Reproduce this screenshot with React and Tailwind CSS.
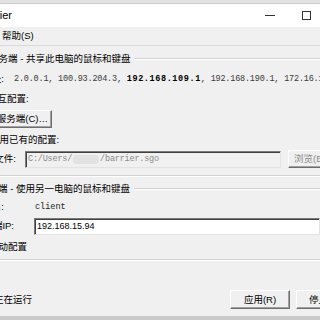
import React from "react";

const cjk = "font-['Liberation_Sans','Noto_Sans_CJK_SC',sans-serif]";
const mono = "font-['Liberation_Mono','Noto_Sans_CJK_SC',monospace]";

// raised classic button edges
const raised =
  "border border-t-[#ffffff] border-l-[#ffffff] border-b-[#6e6e6e] border-r-[#6e6e6e] bg-[#f0f0f0] shadow-[inset_-1px_-1px_0_#a0a0a0]";
const sunken =
  "border border-t-[#7a7a7a] border-l-[#7a7a7a] border-b-[#e3e3e3] border-r-[#e3e3e3] shadow-[inset_1px_1px_0_#404040]";

const GroupTitle = ({ text, shift }) => (
  <div className="flex items-center h-[12px] whitespace-nowrap">
    <span className={`text-[9.5px] leading-none text-black ${shift}`}>{text}</span>
    <div className="flex-1 ml-[4px] h-[2px] border-t border-[#d2d2d2] border-b-white border-b" />
  </div>
);

const ClipLabel = ({ w, text, extra = "" }) => (
  <div className={`flex justify-end shrink-0 whitespace-nowrap ${w}`}>
    <span className={`text-[9.5px] leading-none text-black ${extra}`}>{text}</span>
  </div>
);

export default function App() {
  return (
    <div className={`w-[320px] h-[320px] overflow-hidden bg-[#f0f0f0] flex flex-col ${cjk}`}>
      {/* window top edge */}
      <div className="h-[4px] bg-[#e3e3e3] border-b border-[#cdcdcd] shrink-0" />

      {/* title bar */}
      <div className="h-[23px] bg-white flex items-center shrink-0">
        <span className="text-[11px] text-black ml-[-21px] whitespace-nowrap">Barrier</span>
        <div className="flex-1" />
        <div className="w-[10px] h-px bg-[#333] mr-[27px]" />
        <div className="w-[9px] h-[9px] border border-[#333] mr-[9px]" />
      </div>

      {/* menu bar */}
      <div className="h-[19px] flex items-center border-b border-[#dadada] shrink-0">
        <span className="text-[9.5px] leading-none text-black ml-[2px]">帮助(S)</span>
      </div>

      <div className="flex flex-col mt-[7px]">
        <GroupTitle text="服务端 - 共享此电脑的鼠标和键盘" shift="ml-[-11px]" />

        {/* IP addresses */}
        <div className="flex items-center h-[12px] mt-[8px] whitespace-nowrap">
          <ClipLabel w="w-[4px]" text="IP地址:" />
          <span className={`${mono} text-[8.5px] leading-none text-[#3a3a3a] ml-[10px] tracking-[-0.2px]`}>
            2.0.0.1, 100.93.204.3,{" "}
            <b className="text-black tracking-[0.6px]">192.168.109.1</b>, 192.168.190.1, 172.16.1.1
          </span>
        </div>

        <div className="flex items-center h-[12px] mt-[8px] whitespace-nowrap">
          <span className="text-[9.5px] leading-none text-black ml-[-12px]">交互配置:</span>
        </div>

        <div className="flex mt-[5px] h-[18px]">
          <div className="w-[52px] flex justify-end whitespace-nowrap">
            <button className={`h-[18px] px-[3px] text-[9.5px] leading-none text-black ${raised}`}>
              配置服务端(C)…
            </button>
          </div>
        </div>

        <div className="flex items-center h-[12px] mt-[6px] whitespace-nowrap">
          <span className="text-[9.5px] leading-none text-black ml-[-10px]">使用已有的配置:</span>
        </div>

        <div className="flex items-center h-[18px] mt-[4px]">
          <ClipLabel w="w-[16px]" text="配置文件:" />
          <div className={`ml-[9px] w-[256px] shrink-0 h-[17px] bg-[#f0f0f0] flex items-center ${sunken}`}>
            <span className={`${mono} text-[8.5px] leading-none text-[#8a8a8a] ml-[2px] whitespace-nowrap flex items-center tracking-[-0.2px]`}>
              C:/Users/
              <span className="inline-block w-[26px] h-[9px] rounded-[4px] bg-[#e2e2e2] mx-[1px]" />
              /barrier.sgo
            </span>
          </div>
          <button className={`ml-[7px] h-[18px] w-[50px] shrink-0 text-left pl-[5px] text-[9.5px] leading-none text-[#8a8a8a] whitespace-nowrap ${raised}`}>
            浏览(B)…
          </button>
        </div>

        <div className="mt-[7px] h-[2px] border-t border-[#d2d2d2] border-b border-b-white" />

        <div className="mt-[6px]">
          <GroupTitle text="客户端 - 使用另一电脑的鼠标和键盘" shift="ml-[-21px]" />
        </div>

        <div className="flex items-center h-[12px] mt-[6px] whitespace-nowrap">
          <ClipLabel w="w-[4px]" text="屏幕名:" />
          <span className={`${mono} text-[8.5px] leading-none text-[#222] ml-[31px]`}>client</span>
        </div>

        <div className="flex items-center h-[18px] mt-[4px]">
          <ClipLabel w="w-[14px]" text="服务端IP:" />
          <div className={`ml-[20px] flex-1 h-[17px] bg-white flex items-center ${sunken}`}>
            <span className="text-[9px] leading-none text-black ml-[2px] font-['Liberation_Sans',sans-serif]">
              192.168.15.94
            </span>
          </div>
        </div>

        <div className="flex items-center h-[12px] mt-[6px] whitespace-nowrap">
          <span className="text-[9.5px] leading-none text-black ml-[-11px]">自动配置</span>
        </div>

        <div className="mt-[6px] h-[2px] border-t border-[#d2d2d2] border-b border-b-white" />

        {/* status + buttons */}
        <div className="flex items-center h-[19px] mt-[29px]">
          <span className="text-[9.5px] leading-none text-black ml-[-6px] whitespace-nowrap">正在运行</span>
          <div className="flex-1" />
          <button className={`w-[60px] h-[19px] shrink-0 text-[9.5px] leading-none text-black ${raised}`}>
            应用(R)
          </button>
          <button className={`ml-[6px] w-[60px] h-[19px] shrink-0 text-left pl-[12px] text-[9.5px] leading-none text-black whitespace-nowrap ${raised} -mr-[36px]`}>
            停止(T)
          </button>
        </div>
      </div>

      <div className="flex-1" />
      <div className="h-[4px] bg-[#c9c9c9] shrink-0" />
    </div>
  );
}
